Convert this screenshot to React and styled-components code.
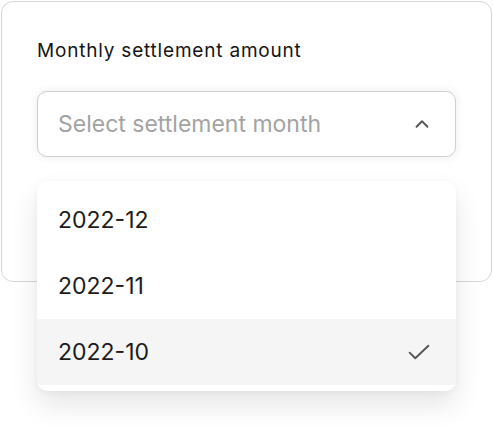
import React from "react";
import styled, { createGlobalStyle } from "styled-components";

const Global = createGlobalStyle`
  html, body { margin: 0; padding: 0; background: #fff; }
  body { font-family: Inter, "Noto Sans", sans-serif; -webkit-font-smoothing: antialiased; }
`;

const Page = styled.div`
  padding: 1px;
  width: 491px;
  min-height: 425px;
`;

const Card = styled.div`
  box-sizing: border-box;
  width: 491px;
  height: 281px;
  border: 1px solid #d6d6d6;
  border-radius: 12px;
  padding: 35px 35px 0 35px;
  display: flex;
  flex-direction: column;
  gap: 26px;
`;

const Label = styled.div`
  font-size: 19px;
  line-height: 28px;
  font-weight: 400;
  color: #141414;
  letter-spacing: 0.8px;
`;

const SelectWrap = styled.div`
  position: relative;
`;

const Trigger = styled.div`
  box-sizing: border-box;
  height: 66px;
  border: 1px solid #cfcfcf;
  border-radius: 10px;
  box-shadow: 0 0 7px 3px rgba(0, 0, 0, 0.045);
  display: flex;
  align-items: center;
  justify-content: space-between;
  padding: 0 22px 0 20px;
  background: #fff;
`;

const Placeholder = styled.span`
  font-size: 23px;
  color: #a3a3a3;
`;

const Menu = styled.ul`
  position: absolute;
  left: 0;
  right: 0;
  top: calc(100% + 24px);
  margin: 0;
  padding: 6px 0;
  list-style: none;
  background: #fff;
  border-radius: 10px;
  box-shadow: 0 14px 28px rgba(0, 0, 0, 0.1), 0 2px 6px rgba(0, 0, 0, 0.04);
`;

const Item = styled.li`
  height: 66px;
  display: flex;
  align-items: center;
  justify-content: space-between;
  padding: 0 22px 0 21px;
  font-size: 23px;
  color: #1c1c1c;
  background: ${(p) => (p.$active ? "#f5f5f5" : "#fff")};
`;

const Icon = ({ children, size = 18, sw = 2 }) => (
  <svg width={size} height={size} viewBox="0 0 24 24" fill="none" stroke="#555" strokeWidth={sw} strokeLinecap="round" strokeLinejoin="round">
    {children}
  </svg>
);

const months = ["2022-12", "2022-11", "2022-10"];

export default function App() {
  return (
    <Page>
      <Global />
      <Card>
        <Label>Monthly settlement amount</Label>
        <SelectWrap>
          <Trigger>
            <Placeholder>Select settlement month</Placeholder>
            <Icon size={22} sw={2}>
              <path d="M6 15l6-6 6 6" />
            </Icon>
          </Trigger>
          <Menu>
            {months.map((m) => (
              <Item key={m} $active={m === "2022-10"}>
                {m}
                {m === "2022-10" && (
                  <Icon size={30} sw={1.5}>
                    <path d="M4.5 12.5l4.5 4.5L19.5 7" />
                  </Icon>
                )}
              </Item>
            ))}
          </Menu>
        </SelectWrap>
      </Card>
    </Page>
  );
}
